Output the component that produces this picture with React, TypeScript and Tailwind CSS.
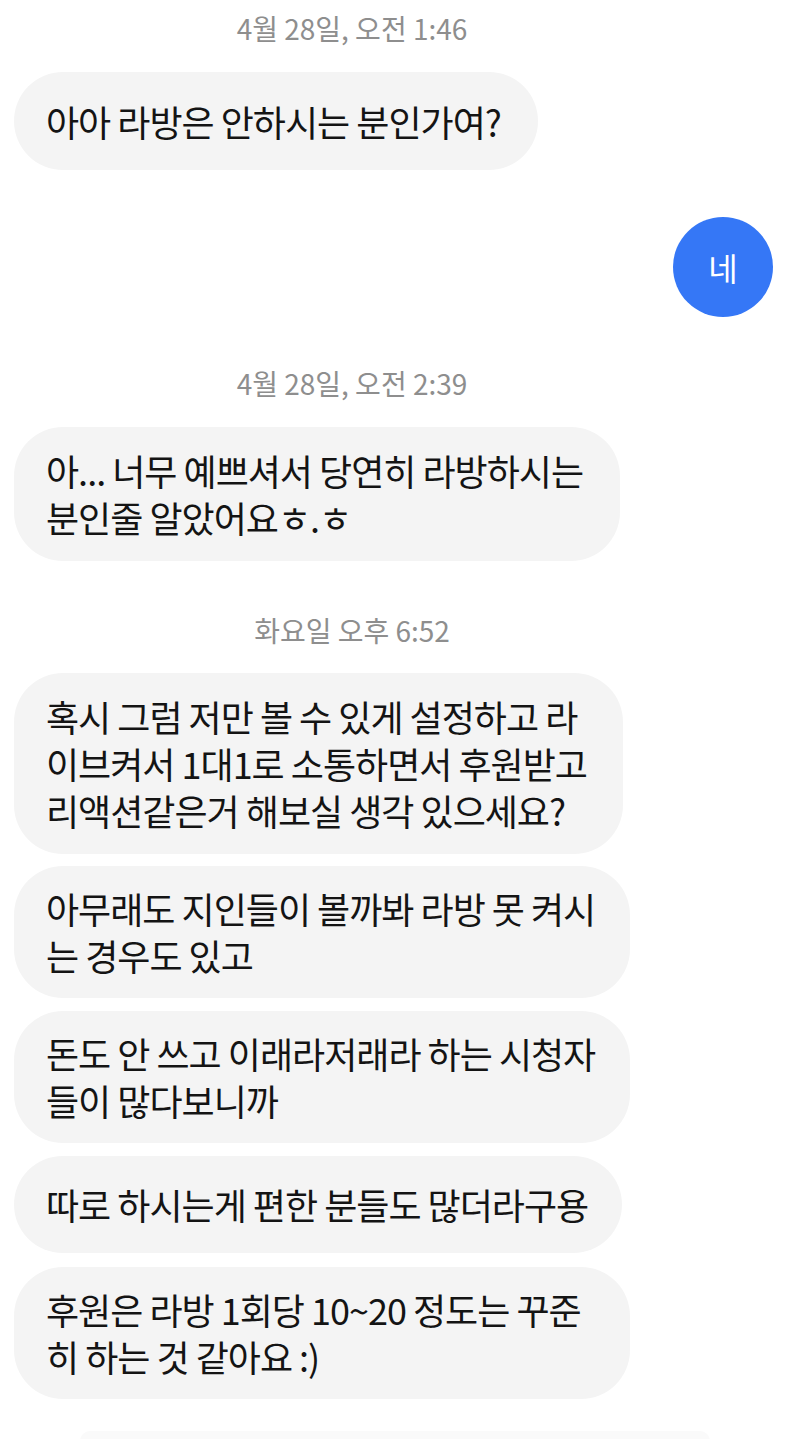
import React from "react";

const FONT = "font-['Noto_Sans_CJK_KR','Noto_Sans',sans-serif]";

function Stamp({ children, className = "" }: { children: React.ReactNode; className?: string }) {
  return (
    <div className={`pr-[96px] text-center text-[28px] leading-[30px] text-[#8e8e8e] ${className}`}>
      {children}
    </div>
  );
}

function Bubble({
  w,
  lines,
  className = "",
  py = "py-[20px]",
}: {
  w: string;
  lines: string[];
  className?: string;
  py?: string;
}) {
  return (
    <div
      className={`ml-[14px] flex min-h-[97px] items-center rounded-[49px] bg-[#f4f4f4] px-[32px] ${py} ${w} ${className}`}
    >
      <div className="whitespace-nowrap text-[36px] leading-[47px] tracking-[-1px] text-[#141414]">
        {lines.map((l, i) => (
          <div key={i}>{l}</div>
        ))}
      </div>
    </div>
  );
}

export default function App() {
  return (
    <div className={`relative h-[1439px] w-[800px] overflow-hidden bg-white ${FONT}`}>
      <div className="flex flex-col pt-[13px]">
        <Stamp>4월 28일, 오전 1:46</Stamp>
        <Bubble w="w-[524px]" className="mt-[29px] min-h-[98px]" lines={["아아 라방은 안하시는 분인가여?"]} />
        <div className="mt-[47px] flex justify-end pr-[27px]">
          <div className="flex h-[100px] w-[100px] items-center justify-center rounded-full bg-[#3577f6] text-[32px] text-white">
            네
          </div>
        </div>
        <Stamp className="mt-[51px]">4월 28일, 오전 2:39</Stamp>
        <Bubble
          w="w-[606px]"
          className="mt-[29px]"
          lines={["아... 너무 예쁘셔서 당연히 라방하시는", "분인줄 알았어요ㅎ.ㅎ"]}
        />
        <Stamp className="mt-[54px]">화요일 오후 6:52</Stamp>
        <Bubble
          w="w-[609px]"
          className="mt-[28px]"
          lines={[
            "혹시 그럼 저만 볼 수 있게 설정하고 라",
            "이브켜서 1대1로 소통하면서 후원받고",
            "리액션같은거 해보실 생각 있으세요?",
          ]}
        />
        <Bubble
          w="w-[616px]"
          className="mt-[12px]"
          py="py-[19px]"
          lines={["아무래도 지인들이 볼까봐 라방 못 켜시", "는 경우도 있고"]}
        />
        <Bubble
          w="w-[616px]"
          className="mt-[13px]"
          py="py-[19px]"
          lines={["돈도 안 쓰고 이래라저래라 하는 시청자", "들이 많다보니까"]}
        />
        <Bubble w="w-[608px]" className="mt-[13px]" lines={["따로 하시는게 편한 분들도 많더라구용"]} />
        <Bubble
          w="w-[616px]"
          className="mt-[14px]"
          py="py-[19px]"
          lines={["후원은 라방 1회당 10~20 정도는 꾸준", "히 하는 것 같아요 :)"]}
        />
        <div className="mx-[80px] mt-[32px] h-[10px] w-[630px] rounded-t-[20px] bg-[#fafafa]" />
      </div>
    </div>
  );
}
